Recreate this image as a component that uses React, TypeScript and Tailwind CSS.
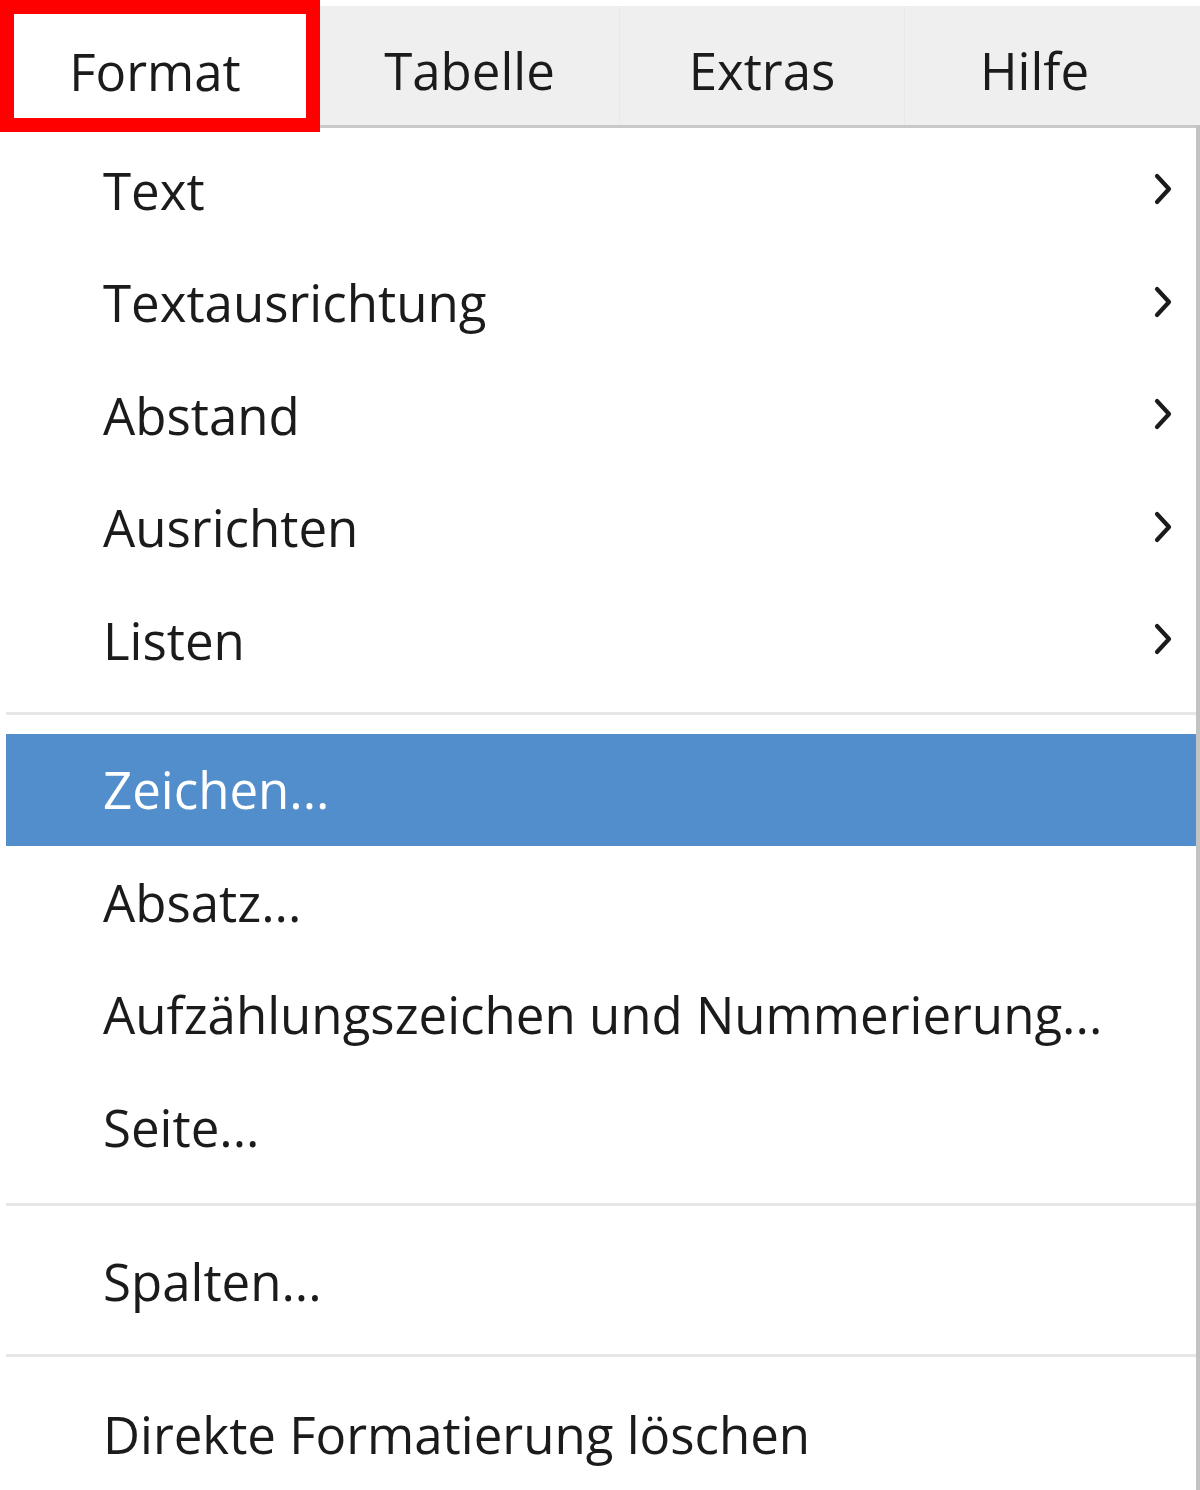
const TOP_MENU = ["Format", "Tabelle", "Extras", "Hilfe"];

type Entry =
  | { kind: "item"; label: string; sub?: boolean; active?: boolean }
  | { kind: "sep"; size: "a" | "b" | "c" };

const ENTRIES: Entry[] = [
  { kind: "item", label: "Text", sub: true },
  { kind: "item", label: "Textausrichtung", sub: true },
  { kind: "item", label: "Abstand", sub: true },
  { kind: "item", label: "Ausrichten", sub: true },
  { kind: "item", label: "Listen", sub: true },
  { kind: "sep", size: "a" },
  { kind: "item", label: "Zeichen...", active: true },
  { kind: "item", label: "Absatz..." },
  { kind: "item", label: "Aufzählungszeichen und Nummerierung..." },
  { kind: "item", label: "Seite..." },
  { kind: "sep", size: "b" },
  { kind: "item", label: "Spalten..." },
  { kind: "sep", size: "c" },
  { kind: "item", label: "Direkte Formatierung löschen" },
];

const SEP_CLASS = {
  a: "h-[37px] pt-[15px]",
  b: "h-[42px] pt-[19px]",
  c: "h-[40px] pt-[16px]",
};

function Chevron() {
  return (
    <svg width="22" height="34" viewBox="0 0 22 34" fill="none" className="shrink-0">
      <path d="M5 3 L17 16 L5 29" stroke="#1b1b1b" strokeWidth="4.2" strokeLinecap="round" strokeLinejoin="round" />
    </svg>
  );
}

export default function App() {
  return (
    <div className="h-[1490px] w-[1200px] overflow-hidden bg-white font-['Open_Sans','Noto_Sans',sans-serif] text-[#1b1b1b]">
      <div className="h-[6px] bg-white" />
      <div className="flex h-[122px] border-b-[3px] border-[#c9c9c9] bg-[#efefef] text-[51px]">
        {TOP_MENU.map((label, i) => (
          <div
            key={label}
            className={
              i === 0
                ? "-mt-[6px] flex h-[132px] w-[320px] items-center justify-center border-[14px] border-[#ff0000] bg-white pt-[10px] pr-[10px]"
                : i === 1
                  ? "flex w-[300px] items-center justify-center border-r border-[#e9e9e9] pt-[10px]"
                  : i === 2
                    ? "flex w-[285px] items-center justify-center border-r border-[#e9e9e9] pt-[10px]"
                    : "flex flex-1 items-center justify-center pt-[10px] pr-[36px]"
            }
          >
            {label}
          </div>
        ))}
      </div>
      <div className="-mt-[3px] flex w-[1200px] flex-col border-r-[4px] border-[#c3c3c3] pt-[9px] pl-[6px] text-[51px]">
        {ENTRIES.map((e, i) =>
          e.kind === "sep" ? (
            <div key={i} className={SEP_CLASS[e.size]}>
              <div className="h-[3px] w-full bg-[#e6e6e6]" />
            </div>
          ) : (
            <div
              key={i}
              className={
                e.active
                  ? "flex h-[112.5px] items-center justify-between bg-[#528ecb] pr-[22px] pl-[97px] text-white"
                  : "flex h-[112.5px] items-center justify-between pr-[22px] pl-[97px]"
              }
            >
              <span className="leading-none">{e.label}</span>
              {e.sub && <Chevron />}
            </div>
          )
        )}
      </div>
    </div>
  );
}
